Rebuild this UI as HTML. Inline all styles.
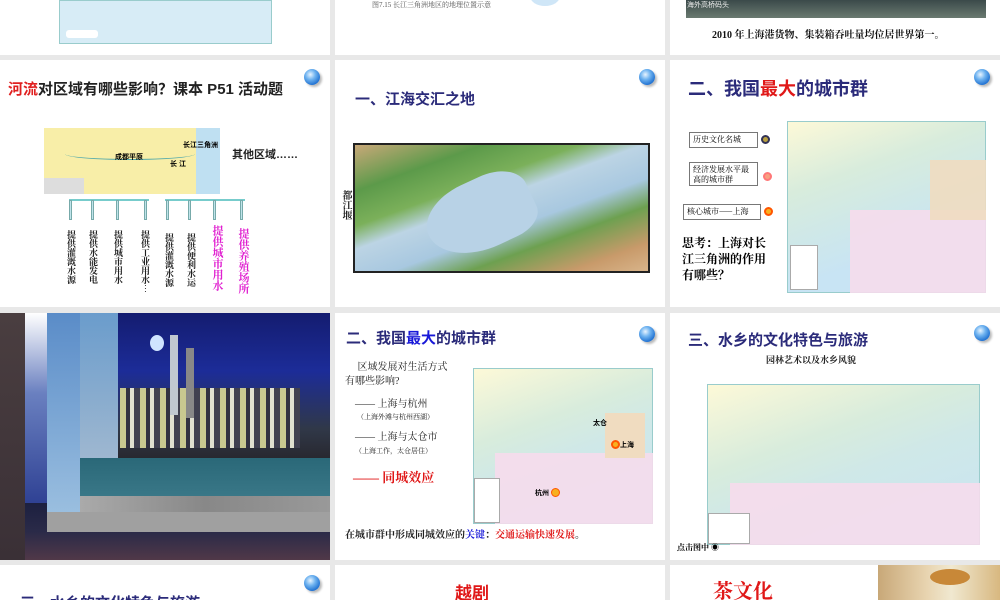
<!DOCTYPE html>
<html><head><meta charset="utf-8"><style>
*{margin:0;padding:0;box-sizing:border-box}
body{width:1000px;height:600px;overflow:hidden;background:#e8e8e8;position:relative;font-family:"Liberation Sans","Noto Sans CJK SC",sans-serif}
.s{position:absolute;background:#fff;overflow:hidden}
.a{position:absolute}
.g{position:absolute;width:16px;height:16px;border-radius:50%;background:radial-gradient(circle at 40% 35%,#e8f4ff 0,#6fb3f0 35%,#1e6fd0 75%,#0d4aa0 100%);box-shadow:2px 2px 2px #bbb}
.t{font-family:"Liberation Serif","Noto Serif CJK SC",serif}
.nv{color:#2b2b7a;font-weight:bold}
.vt{position:absolute;writing-mode:vertical-rl;font-size:9px;font-weight:bold;line-height:10px;font-family:"Noto Serif CJK SC",serif;color:#222}
.arr{position:absolute;width:3px;height:20px;background:#bfe3ea;border:1px solid #7aa}
.lb{position:absolute;border:1px solid #777;font-size:8px;padding:2px 3px;font-family:"Noto Serif CJK SC",serif;background:#fff;line-height:10px}
.dot{position:absolute;width:9px;height:9px;border-radius:50%}
</style></head><body>
<!-- row 0 -->
<div class="s" style="left:0;top:0;width:330px;height:55px">
 <div class="a" style="left:59px;top:0;width:213px;height:44px;background:#d7ecf6;border:1px solid #9cc"></div>
 <div class="a" style="left:66px;top:30px;width:32px;height:8px;background:#fff;border-radius:3px"></div>
</div>
<div class="s" style="left:335px;top:0;width:330px;height:55px">
 <div class="a t" style="left:37px;top:0;font-size:7px;color:#555">图7.15 长江三角洲地区的地理位置示意</div>
 <div class="a" style="left:195px;top:-14px;width:30px;height:20px;border-radius:50%;background:#cfe6f7"></div>
</div>
<div class="s" style="left:670px;top:0;width:330px;height:55px">
 <div class="a" style="left:16px;top:0;width:300px;height:18px;background:linear-gradient(#3b4a4a,#6a7a70)"></div>
 <div class="a" style="left:17px;top:0;font-size:7px;color:#eee">海外高桥码头</div>
 <div class="a t" style="left:42px;top:26px;font-size:10px;font-weight:bold;color:#111">2010 年上海港货物、集装箱吞吐量均位居世界第一。</div>
</div>
<!-- row 1 -->
<div class="s" style="left:0;top:60px;width:330px;height:247px">
 <div class="a" style="left:8px;top:18px;font-size:15px;font-weight:bold;color:#222;white-space:nowrap"><span style="color:#e02020">河流</span>对区域有哪些影响？课本 P51 活动题</div>
 <div class="g" style="left:304px;top:9px"></div>
 <div class="a" style="left:44px;top:68px;width:176px;height:66px;background:#f8eea8"></div>
 <div class="a" style="left:196px;top:68px;width:24px;height:66px;background:#bfe0f2"></div>
 <div class="a" style="left:44px;top:118px;width:40px;height:16px;background:#ddd"></div>
 <div class="a" style="left:65px;top:88px;width:130px;height:12px;border-bottom:1.5px solid #5aa;border-radius:50%"></div>
 <div class="a" style="left:183px;top:80px;font-size:7px;font-weight:bold">长江三角洲</div>
 <div class="a" style="left:115px;top:92px;font-size:7px;font-weight:bold">成都平原</div>
 <div class="a" style="left:170px;top:99px;font-size:7px;font-weight:bold">长 江</div>
 <div class="a" style="left:232px;top:86px;font-size:11px;font-weight:bold;color:#222">其他区域……</div>
 <div class="a" style="left:69px;top:139px;width:80px;height:2px;background:#7cc"></div>
 <div class="a" style="left:165px;top:139px;width:80px;height:2px;background:#7cc"></div>
 <div class="arr" style="left:69px;top:140px"></div><div class="arr" style="left:91px;top:140px"></div><div class="arr" style="left:116px;top:140px"></div><div class="arr" style="left:144px;top:140px"></div>
 <div class="arr" style="left:166px;top:140px"></div><div class="arr" style="left:188px;top:140px"></div><div class="arr" style="left:213px;top:140px"></div><div class="arr" style="left:240px;top:140px"></div>
 <div class="vt" style="left:66px;top:170px">提供灌溉水源</div>
 <div class="vt" style="left:88px;top:170px">提供水能发电</div>
 <div class="vt" style="left:113px;top:170px">提供城市用水</div>
 <div class="vt" style="left:140px;top:170px">提供工业用水…</div>
 <div class="vt" style="left:164px;top:173px">提供灌溉水源</div>
 <div class="vt" style="left:186px;top:173px">提供便利水运</div>
 <div class="vt" style="left:211px;top:165px;font-size:11px;line-height:13px;color:#e020d0">提供城市用水</div>
 <div class="vt" style="left:237px;top:168px;font-size:11px;line-height:13px;color:#e020d0">提供养殖场所</div>
</div>
<div class="s" style="left:335px;top:60px;width:330px;height:247px">
 <div class="a nv" style="left:20px;top:28px;font-size:15px">一、江海交汇之地</div>
 <div class="g" style="left:304px;top:9px"></div>
 <div class="vt" style="left:6px;top:130px;font-size:10px;line-height:12px">都江堰</div>
 <div class="a" style="left:18px;top:83px;width:297px;height:130px;border:2px solid #222;background:linear-gradient(160deg,#c8a878 0,#5c9a4a 20%,#7bb05a 35%,#bcd4e4 45%,#a8c8e0 60%,#6da050 72%,#c89a6a 88%,#d8b48a 100%)"></div>
 <div class="a" style="left:90px;top:120px;width:110px;height:70px;background:#b8d2e6;border-radius:50% 40% 30% 60%;transform:rotate(-25deg)"></div>
</div>
<div class="s" style="left:670px;top:60px;width:330px;height:247px">
 <div class="a nv" style="left:18px;top:15px;font-size:18px">二、我国<span style="color:#e01818">最大</span>的城市群</div>
 <div class="g" style="left:304px;top:9px"></div>
 <div class="lb" style="left:19px;top:72px;width:69px">历史文化名城</div>
 <div class="dot" style="left:91px;top:75px;background:#b9a040;border:2px solid #335"></div>
 <div class="lb" style="left:19px;top:102px;width:69px;height:24px">经济发展水平最高的城市群</div>
 <div class="dot" style="left:93px;top:112px;background:#f7a080;border:2px solid #f77"></div>
 <div class="lb" style="left:13px;top:144px;width:78px">核心城市——上海</div>
 <div class="dot" style="left:94px;top:147px;background:#f7b020;border:2px solid #f50"></div>
 <div class="a t" style="left:12px;top:175px;font-size:12px;font-weight:bold;line-height:16px;width:95px">思考：上海对长江三角洲的作用有哪些？</div>
 <div class="a" style="left:117px;top:61px;width:199px;height:172px;border:1px solid #9cc;background:linear-gradient(160deg,#fdf9d8 0,#d8ecdc 30%,#cfe8e8 50%,#c8e4f4 70%,#c8e4f4 100%)"></div>
 <div class="a" style="left:180px;top:150px;width:136px;height:83px;background:#f6dcec;opacity:.9"></div>
 <div class="a" style="left:260px;top:100px;width:56px;height:60px;background:#f0dcc0;opacity:.9"></div>
 <div class="a" style="left:120px;top:185px;width:28px;height:45px;background:#fff;border:1px solid #aaa"></div>
</div>
<!-- row 2 -->
<div class="s" style="left:0;top:313px;width:330px;height:247px;background:#1a1a3a">
 <div class="a" style="left:0;top:0;width:25px;height:247px;background:linear-gradient(#4a3e40,#3a3036)"></div>
 <div class="a" style="left:25px;top:0;width:22px;height:200px;background:linear-gradient(#fff,#6a80c0 40%,#2a3c90)"></div>
 <div class="a" style="left:25px;top:190px;width:305px;height:57px;background:linear-gradient(#1c2040,#2a2a48 50%,#503848)"></div>
 <div class="a" style="left:47px;top:0;width:33px;height:206px;background:linear-gradient(#5a8cc8,#9cc0e0)"></div>
 <div class="a" style="left:80px;top:0;width:38px;height:150px;background:linear-gradient(#6a9ccc,#a0b8d0)"></div>
 <div class="a" style="left:118px;top:0;width:212px;height:145px;background:linear-gradient(#141c70,#1c2c98 40%,#303848 80%,#282830)"></div>
 <div class="a" style="left:150px;top:22px;width:14px;height:16px;border-radius:50%;background:#cfe4ff"></div>
 <div class="a" style="left:120px;top:75px;width:180px;height:60px;background:repeating-linear-gradient(90deg,#c8c890 0 6px,#303040 6px 10px,#e0e0d0 10px 14px,#404050 14px 20px)"></div>
 <div class="a" style="left:170px;top:22px;width:8px;height:80px;background:#c0c8d0"></div>
 <div class="a" style="left:186px;top:35px;width:8px;height:70px;background:#888"></div>
 <div class="a" style="left:80px;top:145px;width:250px;height:40px;background:linear-gradient(#2a6878,#3a7888)"></div>
 <div class="a" style="left:80px;top:183px;width:250px;height:16px;background:linear-gradient(90deg,#aaa,#888 50%,#999)"></div>
 <div class="a" style="left:47px;top:199px;width:283px;height:20px;background:#a0a0a0"></div>
</div>
<div class="s" style="left:335px;top:313px;width:330px;height:247px">
 <div class="a nv" style="left:11px;top:14px;font-size:15px">二、我国<span style="color:#1818d8">最大</span>的城市群</div>
 <div class="g" style="left:304px;top:13px"></div>
 <div class="a t" style="left:10px;top:48px;font-size:10px;line-height:14px;color:#222;width:110px">&nbsp;&nbsp;&nbsp;&nbsp;&nbsp;区域发展对生活方式有哪些影响?</div>
 <div class="a t" style="left:20px;top:82px;font-size:10px;color:#222">—— 上海与杭州</div>
 <div class="a t" style="left:22px;top:99px;font-size:7px;color:#222">（上海外滩与杭州西湖）</div>
 <div class="a t" style="left:20px;top:115px;font-size:10px;color:#222">—— 上海与太仓市</div>
 <div class="a t" style="left:20px;top:133px;font-size:7px;color:#222">（上海工作，太仓居住）</div>
 <div class="a t" style="left:18px;top:154px;font-size:13px;font-weight:bold;color:#e01818">—— 同城效应</div>
 <div class="a" style="left:138px;top:55px;width:180px;height:156px;border:1px solid #9cc;background:linear-gradient(160deg,#fdf9d8 0,#d8ecdc 35%,#cfe8e8 55%,#c8e4f4 100%)"></div>
 <div class="a" style="left:160px;top:140px;width:158px;height:71px;background:#f6dcec;opacity:.9"></div>
 <div class="a" style="left:270px;top:100px;width:40px;height:45px;background:#f0dcc0"></div>
 <div class="dot" style="left:276px;top:127px;background:#f7b020;border:2px solid #f50"></div>
 <div class="a" style="left:285px;top:127px;font-size:7px;font-weight:bold">上海</div>
 <div class="a" style="left:258px;top:105px;font-size:7px;font-weight:bold">太仓</div>
 <div class="a" style="left:200px;top:175px;font-size:7px;font-weight:bold">杭州</div>
 <div class="dot" style="left:216px;top:175px;background:#f7b020;border:1px solid #f50"></div>
 <div class="a" style="left:139px;top:165px;width:26px;height:45px;background:#fff;border:1px solid #aaa"></div>
 <div class="a t" style="left:10px;top:213px;font-size:10px;font-weight:bold;color:#222;white-space:nowrap">在城市群中形成同城效应的<span style="color:#1818d8">关键</span>：<span style="color:#e01818">交通运输快速发展</span>。</div>
</div>
<div class="s" style="left:670px;top:313px;width:330px;height:247px">
 <div class="a nv" style="left:18px;top:16px;font-size:15px">三、水乡的文化特色与旅游</div>
 <div class="g" style="left:304px;top:12px"></div>
 <div class="a t" style="left:96px;top:40px;font-size:9px;font-weight:bold;color:#222">园林艺术以及水乡风貌</div>
 <div class="a" style="left:37px;top:71px;width:273px;height:161px;border:1px solid #9cc;background:linear-gradient(160deg,#fdf9d8 0,#d8ecdc 35%,#cfe8e8 55%,#c8e4f4 100%)"></div>
 <div class="a" style="left:60px;top:170px;width:250px;height:62px;background:#f6dcec;opacity:.9"></div>
 <div class="a" style="left:38px;top:200px;width:42px;height:31px;background:#fff;border:1px solid #aaa"></div>
 <div class="a t" style="left:7px;top:229px;font-size:8px;font-weight:bold">点击图中 ◉</div>
</div>
<!-- row 3 -->
<div class="s" style="left:0;top:565px;width:330px;height:35px">
 <div class="a nv" style="left:20px;top:27px;font-size:15px">三、水乡的文化特色与旅游</div>
 <div class="g" style="left:304px;top:10px"></div>
</div>
<div class="s" style="left:335px;top:565px;width:330px;height:35px">
 <div class="a" style="left:120px;top:14px;font-size:17px;font-weight:bold;color:#e01818">越剧</div>
</div>
<div class="s" style="left:670px;top:565px;width:330px;height:35px">
 <div class="a t" style="left:43px;top:10px;font-size:20px;font-weight:bold;color:#e01818">茶文化</div>
 <div class="a" style="left:208px;top:0;width:122px;height:35px;background:linear-gradient(90deg,#c8a878,#e8d4b0 40%,#f0e8d0 60%,#d8b880)"></div>
 <div class="a" style="left:260px;top:4px;width:40px;height:16px;border-radius:50%;background:#c88838"></div>
</div>
</body></html>
